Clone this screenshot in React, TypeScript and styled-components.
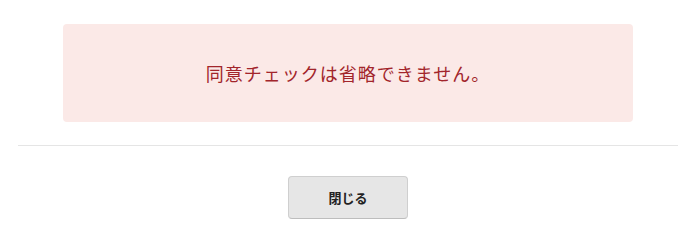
import React from "react";
import styled, { createGlobalStyle } from "styled-components";

const Global = createGlobalStyle`
  html, body { margin: 0; padding: 0; background: #fff; }
  body { font-family: "Noto Sans CJK JP", "Noto Sans", sans-serif; }
`;

const Page = styled.div`
  padding: 0 22px 0 18px;
`;

const Alert = styled.div`
  margin: 24px 45px 0;
  height: 98px;
  background: #fbe9e7;
  border-radius: 4px;
  display: flex;
  align-items: center;
  justify-content: center;
  color: #a2252b;
  font-size: 18px;
  letter-spacing: 1px;
`;

const Divider = styled.hr`
  margin: 23px 0 0;
  border: 0;
  border-top: 1px solid #e5e5e5;
  height: 0;
`;

const Footer = styled.div`
  display: flex;
  justify-content: center;
  padding-top: 30px;
`;

const Button = styled.button`
  width: 120px;
  height: 43px;
  background: #e6e6e6;
  border: 1px solid #cfcfcf;
  border-bottom-color: #bdbdbd;
  border-radius: 4px;
  font-family: "Noto Sans CJK JP", "Noto Sans", sans-serif;
  font-weight: bold;
  font-size: 13px;
  color: #222;
  cursor: pointer;
`;

export default function App() {
  return (
    <>
      <Global />
      <Page>
        <Alert>同意チェックは省略できません。</Alert>
        <Divider />
        <Footer>
          <Button>閉じる</Button>
        </Footer>
      </Page>
    </>
  );
}
